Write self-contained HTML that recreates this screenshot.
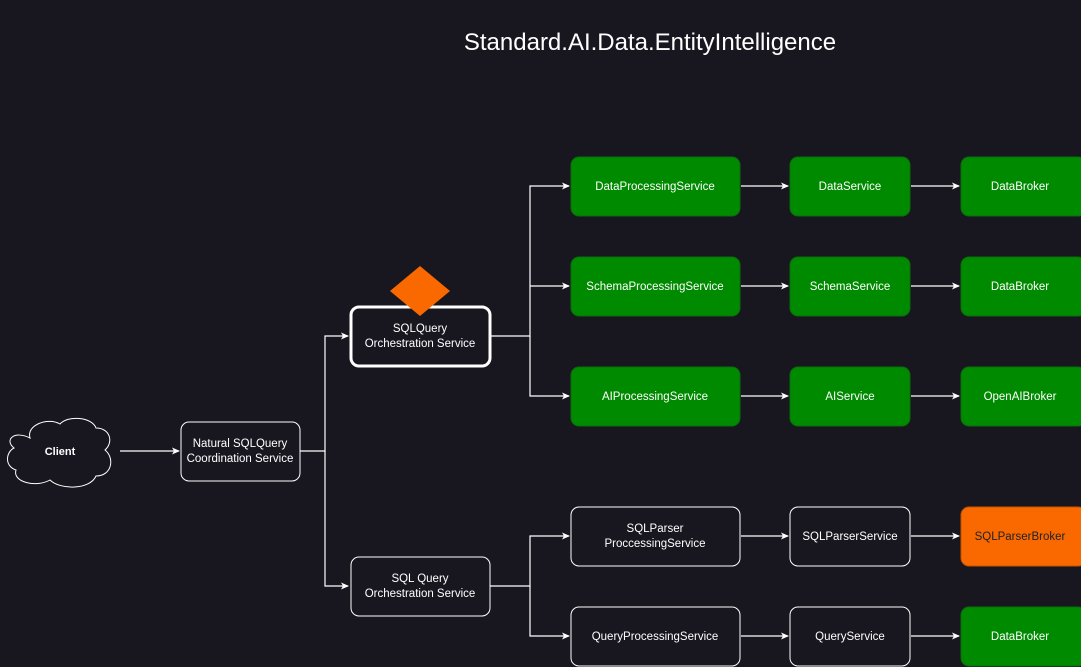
<!DOCTYPE html>
<html><head><style>
html,body{margin:0;padding:0;background:#18161f;}
svg{display:block}
text{font-family:"Liberation Sans",sans-serif;font-size:11.5px;fill:#fff;text-anchor:middle}
</style></head><body>
<svg width="1081" height="667" viewBox="0 0 1081 667" xmlns="http://www.w3.org/2000/svg">
<defs><marker id="a" markerWidth="8" markerHeight="8" refX="7" refY="4" orient="auto" markerUnits="userSpaceOnUse"><path d="M0,0.5 L8,4 L0,7.5 L2,4 Z" fill="#fff"/></marker></defs>
<rect width="1081" height="667" fill="#18161f"/>
<text x="650" y="50" style="font-size:24px">Standard.AI.Data.EntityIntelligence</text>
<g stroke="#fff" stroke-width="1.2" fill="none">
<path d="M120,451 H179" marker-end="url(#a)"/>
<path d="M300,451 H325 V336 H348" marker-end="url(#a)"/>
<path d="M325,451 V586 H348" marker-end="url(#a)"/>
<path d="M490,336 H530 V186 H569" marker-end="url(#a)"/>
<path d="M530,286 H569" marker-end="url(#a)"/>
<path d="M530,336 V396 H569" marker-end="url(#a)"/>
<path d="M490,586 H530 V536 H569" marker-end="url(#a)"/>
<path d="M530,586 V636 H569" marker-end="url(#a)"/>
<path d="M741,186 H788" marker-end="url(#a)"/>
<path d="M741,286 H788" marker-end="url(#a)"/>
<path d="M741,396 H788" marker-end="url(#a)"/>
<path d="M741,536 H788" marker-end="url(#a)"/>
<path d="M741,636 H788" marker-end="url(#a)"/>
<path d="M911,186 H959" marker-end="url(#a)"/>
<path d="M911,286 H959" marker-end="url(#a)"/>
<path d="M911,396 H959" marker-end="url(#a)"/>
<path d="M911,536 H959" marker-end="url(#a)"/>
<path d="M911,636 H959" marker-end="url(#a)"/>
</g>
<path d="M30,438 C26,425 48,417 60,424 C68,415 92,417 96,428 C110,428 114,442 105,450 C115,458 112,476 96,476 C90,490 60,490 50,480 C36,488 12,482 16,470 C4,466 6,452 14,448 C4,440 14,430 30,438 Z" fill="none" stroke="#fff" stroke-width="1"/>
<text x="60" y="455" style="font-weight:bold;font-size:11px">Client</text>
<g fill="#18161f" stroke="#fff">
<rect x="181" y="422" width="119" height="59" rx="8" stroke-width="1"/>
<rect x="351" y="307" width="139" height="59" rx="8" stroke-width="3"/>
<rect x="351" y="557" width="139" height="59" rx="8" stroke-width="1"/>
<rect x="571" y="507" width="169" height="59" rx="8" stroke-width="1"/>
<rect x="571" y="607" width="169" height="59" rx="8" stroke-width="1"/>
<rect x="790" y="507" width="120" height="59" rx="8" stroke-width="1"/>
<rect x="790" y="607" width="120" height="59" rx="8" stroke-width="1"/>
</g>
<g fill="#008a00" stroke="#0a6e0a" stroke-width="1">
<rect x="571" y="157" width="169" height="59" rx="8"/>
<rect x="571" y="257" width="169" height="59" rx="8"/>
<rect x="571" y="367" width="169" height="59" rx="8"/>
<rect x="790" y="157" width="120" height="59" rx="8"/>
<rect x="790" y="257" width="120" height="59" rx="8"/>
<rect x="790" y="367" width="120" height="59" rx="8"/>
<rect x="961" y="157" width="125" height="59" rx="8"/>
<rect x="961" y="257" width="125" height="59" rx="8"/>
<rect x="961" y="367" width="125" height="59" rx="8"/>
<rect x="961" y="607" width="125" height="59" rx="8"/>
</g>
<rect x="961" y="507" width="125" height="59" rx="8" fill="#fa6800" stroke="#c75300"/>
<path d="M420,266 L450,291 L420,316 L390,291 Z" fill="#fa6800"/>
<text x="240" y="447">Natural SQLQuery</text><text x="240" y="462">Coordination Service</text>
<text x="420" y="332">SQLQuery</text><text x="420" y="347">Orchestration Service</text>
<text x="420" y="582">SQL Query</text><text x="420" y="597">Orchestration Service</text>
<text x="655" y="532">SQLParser</text><text x="655" y="547">ProccessingService</text>
<text x="655" y="640">QueryProcessingService</text>
<text x="850" y="540">SQLParserService</text>
<text x="850" y="640">QueryService</text>
<text x="655" y="190">DataProcessingService</text>
<text x="655" y="290">SchemaProcessingService</text>
<text x="655" y="400">AIProcessingService</text>
<text x="850" y="190">DataService</text>
<text x="850" y="290">SchemaService</text>
<text x="850" y="400">AIService</text>
<text x="1020" y="190">DataBroker</text>
<text x="1020" y="290">DataBroker</text>
<text x="1020" y="400">OpenAIBroker</text>
<text x="1020" y="540" style="fill:#222">SQLParserBroker</text>
<text x="1020" y="640">DataBroker</text>
</svg>
</body></html>
